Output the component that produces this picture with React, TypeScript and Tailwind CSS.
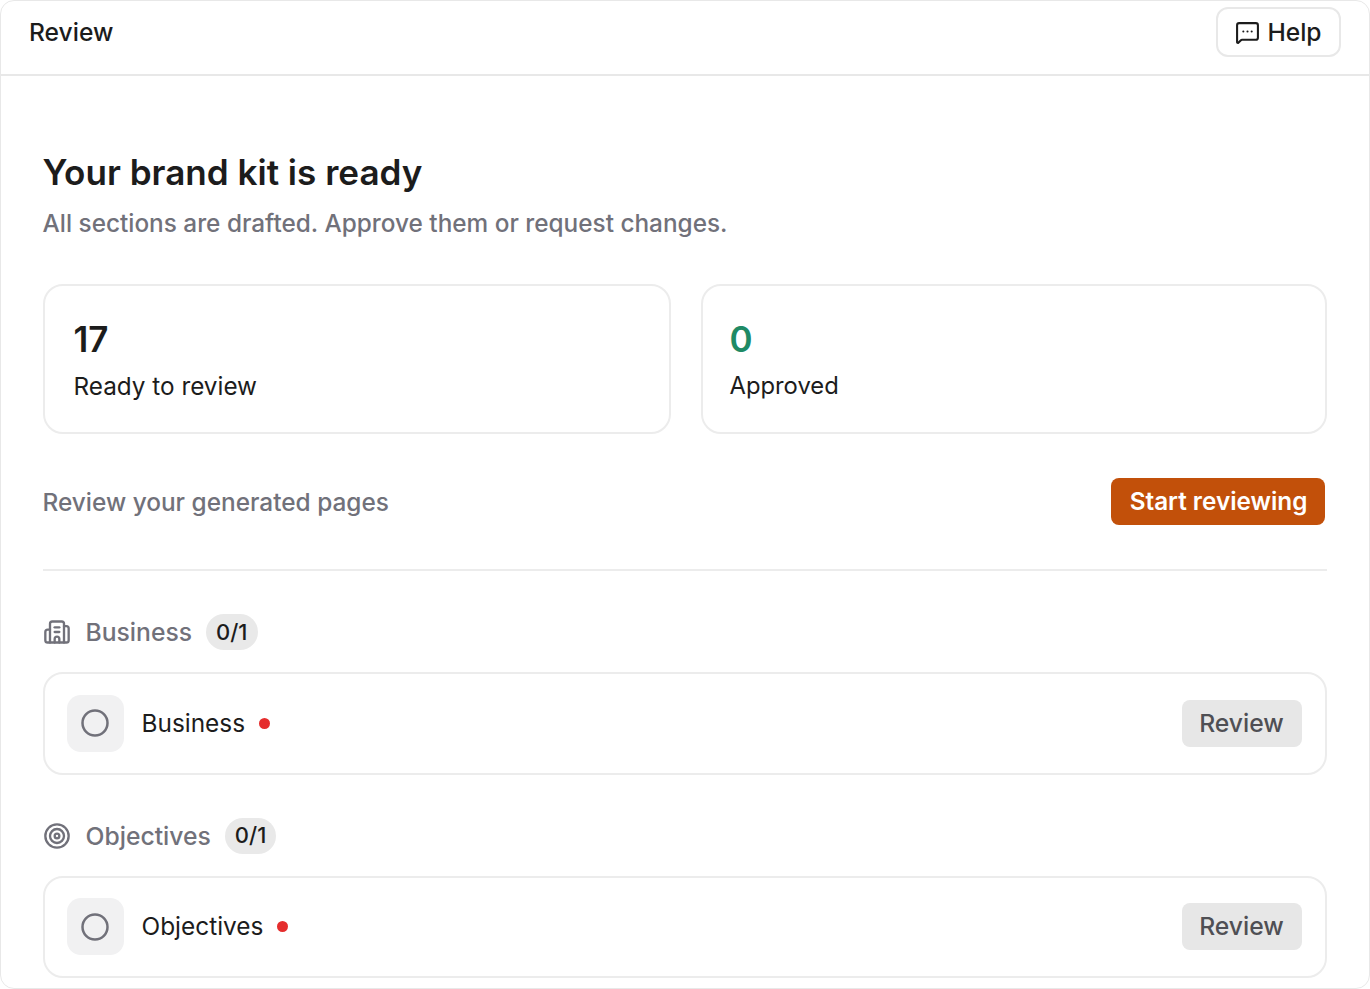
import React from "react";
import { Building2, Circle, MessageSquareMore, Target } from "lucide-react";

function Section({ icon, title }: { icon: React.ReactNode; title: string }) {
  return (
    <section>
      <div className="flex h-[36px] items-center">
        <span className="flex w-[43px] shrink-0 text-[#71717a]">{icon}</span>
        <h2 className="mr-[14px] text-[24.7px] leading-[36px] font-medium text-[#71717a]">{title}</h2>
        <span className="flex h-[36px] items-center rounded-full bg-[#e9e9e9] px-[10px] text-[22px] font-medium text-[#1c1c1c]">0/1</span>
      </div>
      <div className="mt-[22px] flex h-[102.5px] items-center rounded-[20px] border-2 border-[#ececec] pr-[23px] pl-[22px]">
        <span className="flex h-[57px] w-[57px] items-center justify-center rounded-[14px] bg-[#f1f1f2] text-[#71717a]">
          <Circle size={30} strokeWidth={2} />
        </span>
        <span className="ml-[18px] text-[24.4px] text-[#1c1c1c]">{title}</span>
        <span className="ml-[14px] h-[11px] w-[11px] rounded-full bg-[#e52d2d]" />
        <button className="ml-auto h-[47px] w-[120px] rounded-[8px] bg-[#e7e7e7] text-[24.7px] font-medium text-[#4f4f54]">Review</button>
      </div>
    </section>
  );
}

export default function App() {
  return (
    <div className="h-[989px] w-[1370px] overflow-hidden bg-white font-['Inter',sans-serif]">
      <div className="h-full overflow-hidden rounded-[14px] border-[1.5px] border-[#e8e8e8]">
        <header className="flex h-[75px] items-start justify-between border-b-2 border-[#e8e8e8] px-[28px] pt-[6px]">
          <h1 className="mt-[7px] text-[24.6px] leading-[36px] font-medium text-[#1c1c1c]">Review</h1>
          <button className="flex h-[50px] w-[125px] items-center justify-center gap-[7px] rounded-[12px] border-2 border-[#e8e8e8] text-[24.6px] font-medium text-[#1c1c1c]">
            <MessageSquareMore size={25} strokeWidth={2} />
            Help
          </button>
        </header>
        <main className="pt-[72px] pr-[42.5px] pl-[41.5px]">
          <h2 className="text-[35.1px] leading-[48px] font-semibold text-[#1c1c1c]">Your brand kit is ready</h2>
          <p className="mt-[9px] text-[24.35px] leading-[36px] font-medium text-[#71717a]">All sections are drafted. Approve them or request changes.</p>
          <div className="mt-[43px] grid grid-cols-[628px_1fr] gap-[30px]">
            <div className="flex h-[150px] flex-col rounded-[20px] border-2 border-[#ececec] pt-[29px] pl-[29px]">
              <span className="text-[35px] leading-[48px] font-semibold text-[#1c1c1c]">17</span>
              <span className="mt-[5px] text-[24.3px] leading-[36px] text-[#1c1c1c]">Ready to review</span>
            </div>
            <div className="flex h-[150px] flex-col rounded-[20px] border-2 border-[#ececec] pt-[29px] pl-[27px]">
              <span className="text-[35px] leading-[48px] font-semibold text-[#1f8a65]">0</span>
              <span className="mt-[5px] text-[23.8px] leading-[36px] text-[#1c1c1c]">Approved</span>
            </div>
          </div>
          <div className="mt-[44px] flex items-center justify-between border-b-2 border-[#ececec] pr-[2px] pb-[44px]">
            <p className="text-[24.4px] leading-[36px] font-medium text-[#71717a]">Review your generated pages</p>
            <button className="h-[47px] w-[214px] rounded-[8px] bg-[#c2500a] pl-[2px] text-[24.3px] font-semibold text-white">Start reviewing</button>
          </div>
          <div className="mt-[43px] flex flex-col gap-[43px]">
            <Section icon={<Building2 size={28} strokeWidth={2} />} title="Business" />
            <Section icon={<Target size={28} strokeWidth={2} />} title="Objectives" />
          </div>
        </main>
      </div>
    </div>
  );
}
